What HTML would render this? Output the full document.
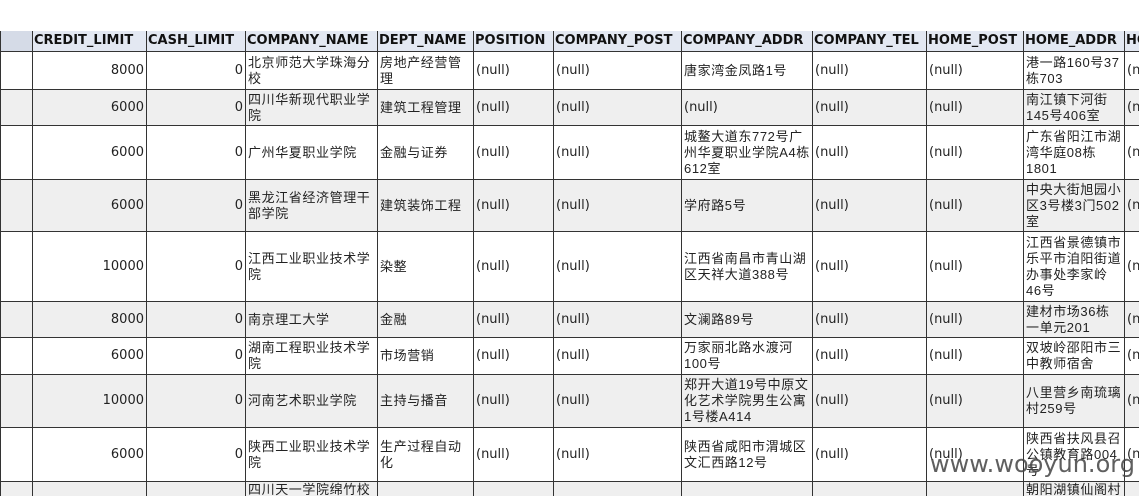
<!DOCTYPE html>
<html><head><meta charset="utf-8"><style>
html,body{margin:0;padding:0;background:#fff}
#w{position:relative;width:1139px;height:496px;overflow:hidden}
table{position:absolute;left:0;top:31px;border-collapse:collapse;table-layout:fixed;width:1160px;font-family:"DejaVu Sans","Noto Sans CJK SC",sans-serif;font-size:13px;color:#222}
td,th{border:1px solid #333;padding:0 2px;vertical-align:middle;overflow:hidden;white-space:nowrap;line-height:16px}
th{background:#e3e8f2;font-weight:bold;font-size:13px;text-align:left;border-top:none;height:20px;color:#111;padding:0 1px}
th.f{background:#d5dbe7}
td.c{font-family:"Liberation Sans","Noto Sans CJK SC",sans-serif;font-size:13px;letter-spacing:0.6px}
td.r{text-align:right}
tr.g td{background:#efefef}
.wm{position:absolute;left:930px;top:450px;font-family:"DejaVu Sans",sans-serif;font-size:24px;color:#444;opacity:.85}
</style></head><body><div id="w">
<table>
<colgroup><col style="width:32px"><col style="width:114px"><col style="width:99px"><col style="width:132px"><col style="width:96px"><col style="width:80px"><col style="width:128px"><col style="width:131px"><col style="width:114px"><col style="width:97px"><col style="width:101px"><col style="width:36px"></colgroup>
<tr><th class="f"></th><th>CREDIT_LIMIT</th><th>CASH_LIMIT</th><th>COMPANY_NAME</th><th>DEPT_NAME</th><th>POSITION</th><th>COMPANY_POST</th><th>COMPANY_ADDR</th><th>COMPANY_TEL</th><th>HOME_POST</th><th>HOME_ADDR</th><th>HO</th></tr>
<tr style="height:38px"><td></td><td class="r">8000</td><td class="r">0</td><td class="c">北京师范大学珠海分<br>校</td><td class="c">房地产经营管<br>理</td><td>(null)</td><td>(null)</td><td class="c">唐家湾金凤路1号</td><td>(null)</td><td>(null)</td><td class="c">港一路160号37<br>栋703</td><td>(n</td></tr>
<tr class="g" style="height:36px"><td></td><td class="r">6000</td><td class="r">0</td><td class="c">四川华新现代职业学<br>院</td><td class="c">建筑工程管理</td><td>(null)</td><td>(null)</td><td>(null)</td><td>(null)</td><td>(null)</td><td class="c">南江镇下河街<br>145号406室</td><td>(n</td></tr>
<tr style="height:54px"><td></td><td class="r">6000</td><td class="r">0</td><td class="c">广州华夏职业学院</td><td class="c">金融与证券</td><td>(null)</td><td>(null)</td><td class="c">城鳌大道东772号广<br>州华夏职业学院A4栋<br>612室</td><td>(null)</td><td>(null)</td><td class="c">广东省阳江市湖<br>湾华庭08栋<br>1801</td><td>(n</td></tr>
<tr class="g" style="height:52px"><td></td><td class="r">6000</td><td class="r">0</td><td class="c">黑龙江省经济管理干<br>部学院</td><td class="c">建筑装饰工程</td><td>(null)</td><td>(null)</td><td class="c">学府路5号</td><td>(null)</td><td>(null)</td><td class="c">中央大街旭园小<br>区3号楼3门502<br>室</td><td>(n</td></tr>
<tr style="height:70px"><td></td><td class="r">10000</td><td class="r">0</td><td class="c">江西工业职业技术学<br>院</td><td class="c">染整</td><td>(null)</td><td>(null)</td><td class="c">江西省南昌市青山湖<br>区天祥大道388号</td><td>(null)</td><td>(null)</td><td class="c">江西省景德镇市<br>乐平市洎阳街道<br>办事处李家岭<br>46号</td><td>(n</td></tr>
<tr class="g" style="height:36px"><td></td><td class="r">8000</td><td class="r">0</td><td class="c">南京理工大学</td><td class="c">金融</td><td>(null)</td><td>(null)</td><td class="c">文澜路89号</td><td>(null)</td><td>(null)</td><td class="c">建材市场36栋<br>一单元201</td><td>(n</td></tr>
<tr style="height:37px"><td></td><td class="r">6000</td><td class="r">0</td><td class="c">湖南工程职业技术学<br>院</td><td class="c">市场营销</td><td>(null)</td><td>(null)</td><td class="c">万家丽北路水渡河<br>100号</td><td>(null)</td><td>(null)</td><td class="c">双坡岭邵阳市三<br>中教师宿舍</td><td>(n</td></tr>
<tr class="g" style="height:53px"><td></td><td class="r">10000</td><td class="r">0</td><td class="c">河南艺术职业学院</td><td class="c">主持与播音</td><td>(null)</td><td>(null)</td><td class="c">郑开大道19号中原文<br>化艺术学院男生公寓<br>1号楼A414</td><td>(null)</td><td>(null)</td><td class="c">八里营乡南琉璃<br>村259号</td><td>(n</td></tr>
<tr style="height:54px"><td></td><td class="r">6000</td><td class="r">0</td><td class="c">陕西工业职业技术学<br>院</td><td class="c">生产过程自动<br>化</td><td>(null)</td><td>(null)</td><td class="c">陕西省咸阳市渭城区<br>文汇西路12号</td><td>(null)</td><td>(null)</td><td class="c">陕西省扶风县召<br>公镇教育路004<br>号</td><td>(n</td></tr>
<tr class="g" style="height:40px"><td></td><td class="r"></td><td class="r"></td><td class="c" style="vertical-align:top">四川天一学院绵竹校</td><td class="c"></td><td></td><td></td><td></td><td></td><td></td><td class="c" style="vertical-align:top">朝阳湖镇仙阁村</td><td></td></tr>
</table>
<div class="wm">www.wooyun.org</div>
</div></body></html>
